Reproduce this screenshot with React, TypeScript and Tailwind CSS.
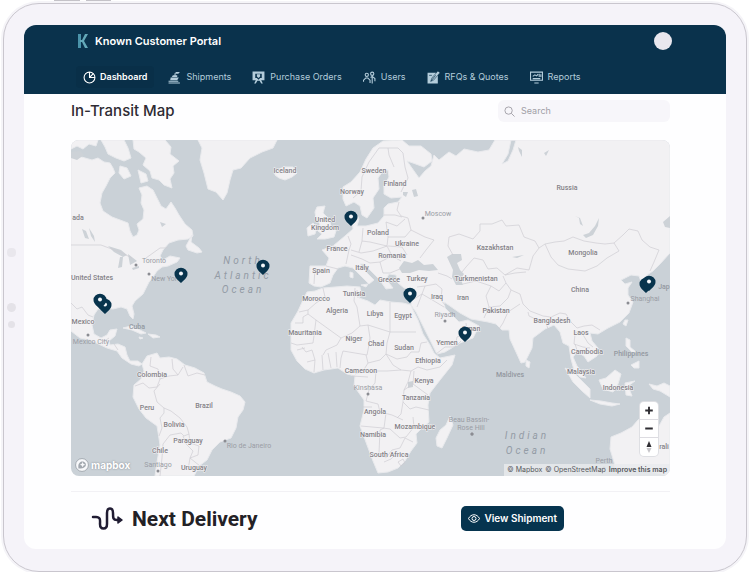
import type { ReactNode } from "react";

type Place = { name: string; x: number; y: number; soft?: boolean };

const countries: Place[] = [
  { name: "ada", x: 78, y: 220 },
  { name: "United States", x: 92, y: 280 },
  { name: "Mexico", x: 83, y: 324 },
  { name: "Cuba", x: 137, y: 329, soft: true },
  { name: "Colombia", x: 152, y: 377 },
  { name: "Brazil", x: 204, y: 408 },
  { name: "Peru", x: 147, y: 410 },
  { name: "Bolivia", x: 174, y: 427 },
  { name: "Paraguay", x: 188, y: 443 },
  { name: "Chile", x: 160, y: 453 },
  { name: "Uruguay", x: 194, y: 470 },
  { name: "Iceland", x: 285, y: 173 },
  { name: "Sweden", x: 374, y: 173 },
  { name: "Finland", x: 395, y: 186 },
  { name: "Norway", x: 352, y: 194 },
  { name: "United", x: 325, y: 222 },
  { name: "Kingdom", x: 325, y: 230 },
  { name: "Poland", x: 378, y: 235 },
  { name: "Ukraine", x: 407, y: 246 },
  { name: "France", x: 337, y: 251 },
  { name: "Romania", x: 392, y: 258 },
  { name: "Italy", x: 362, y: 270 },
  { name: "Spain", x: 321, y: 273 },
  { name: "Greece", x: 389, y: 282 },
  { name: "Turkey", x: 417, y: 281 },
  { name: "Tunisia", x: 354, y: 296 },
  { name: "Morocco", x: 316, y: 301 },
  { name: "Iraq", x: 437, y: 299 },
  { name: "Iran", x: 463, y: 300 },
  { name: "Turkmenistan", x: 476, y: 281 },
  { name: "Kazakhstan", x: 495, y: 250 },
  { name: "Russia", x: 567, y: 190 },
  { name: "Mongolia", x: 583, y: 255 },
  { name: "China", x: 580, y: 292 },
  { name: "Jap", x: 664, y: 289, soft: true },
  { name: "Pakistan", x: 496, y: 313 },
  { name: "Bangladesh", x: 552, y: 323 },
  { name: "Laos", x: 581, y: 335 },
  { name: "Cambodia", x: 587, y: 354 },
  { name: "Philippines", x: 631, y: 356, soft: true },
  { name: "Malaysia", x: 581, y: 374 },
  { name: "Indonesia", x: 618, y: 390 },
  { name: "Maldives", x: 510, y: 377, soft: true },
  { name: "Algeria", x: 337, y: 313 },
  { name: "Libya", x: 375, y: 316 },
  { name: "Egypt", x: 403, y: 318 },
  { name: "Mauritania", x: 305, y: 335 },
  { name: "Niger", x: 354, y: 341 },
  { name: "Chad", x: 376, y: 346 },
  { name: "Sudan", x: 404, y: 350 },
  { name: "Yemen", x: 447, y: 345 },
  { name: "Oman", x: 471, y: 331 },
  { name: "Ethiopia", x: 428, y: 363 },
  { name: "Cameroon", x: 361, y: 373 },
  { name: "Kenya", x: 424, y: 383 },
  { name: "Tanzania", x: 416, y: 400 },
  { name: "Angola", x: 375, y: 414 },
  { name: "Mozambique", x: 415, y: 429 },
  { name: "Namibia", x: 373, y: 437 },
  { name: "South Africa", x: 389, y: 457 },
  { name: "rali", x: 664, y: 449 },
];

const cities = [
  { name: "Toronto", x: 154, y: 263, dotX: 136, dotY: 265 },
  { name: "New York", x: 166, y: 281, dotX: 149, dotY: 274 },
  { name: "Mexico City", x: 91, y: 344, dotX: 88, dotY: 335 },
  { name: "Rio de Janeiro", x: 249, y: 448, dotX: 225, dotY: 441 },
  { name: "Santiago", x: 158, y: 467, dotX: 158, dotY: 471 },
  { name: "Moscow", x: 438, y: 216, dotX: 423, dotY: 218 },
  { name: "Riyadh", x: 445, y: 317, dotX: 445, dotY: 321 },
  { name: "Kinshasa", x: 368, y: 390, dotX: 368, dotY: 394 },
  { name: "Shanghai", x: 645, y: 301, dotX: 628, dotY: 303 },
  { name: "Beau Bassin-", x: 469, y: 422, dotX: 472, dotY: 434 },
  { name: "Rose Hill", x: 471, y: 430, dotX: 472, dotY: 434 },
  { name: "Perth", x: 604, y: 463, dotX: 604, dotY: 468 },
];

const oceans = [
  { name: "North", x: 243, y: 264 },
  { name: "Atlantic", x: 243, y: 279 },
  { name: "Ocean", x: 243, y: 293 },
  { name: "Indian", x: 527, y: 439 },
  { name: "Ocean", x: 527, y: 454 },
];

// x / y is the tip of the pin
const shipments = [
  { x: 105, y: 314 },
  { x: 100, y: 309 },
  { x: 181, y: 283 },
  { x: 263, y: 275 },
  { x: 351, y: 226 },
  { x: 410, y: 303 },
  { x: 465, y: 342 },
  { x: 646, y: 293 },
  { x: 649, y: 291 },
];

const land = [
  // north america
  "M71 158L78 156 85 158 92 160 98 158 104 162 110 163 113 168 115 173 110 178 106 186 102 193 100 203 103 211 112 217 120 220 128 223 130 231 133 237 137 235 139 230 137 224 143 219 144 210 141 203 142 195 139 188 147 186 153 190 157 198 161 206 166 209 171 202 175 208 179 215 185 224 192 230 193 236 188 239 178 240 169 243 163 250 160 256 163 260 170 256 180 258 177 262 168 266 162 267 157 271 153 277 149 282 146 288 143 294 135 301 132 306 134 314 133 319 130 316 127 309 121 307 113 309 105 308 98 309 94 315 92 325 94 334 101 338 107 335 110 330 117 329 115 336 109 341 110 345 118 344 125 347 127 355 130 361 138 361 142 364 139 366 131 364 122 358 117 351 107 348 90 340 80 338 71 331Z",
  // arctic islands
  "M71 140L98 140 96 146 89 144 83 149 77 146 71 149ZM101 140L124 140 128 148 131 158 124 161 116 158 108 154 105 147ZM133 140L165 140 171 147 170 154 179 161 173 166 174 173 170 179 172 188 164 185 159 180 152 178 150 171 143 165 146 158 139 152 134 149ZM120 166L127 168 131 176 124 179 119 173ZM138 170L146 174 148 181 141 183Z",
  "M192 235L191 242 199 248 202 252 197 253 188 250 186 246Z",
  // greenland, iceland
  "M198 140L202 148 200 160 204 173 208 189 216 192 223 200 227 193 230 180 233 170 241 168 250 158 262 152 273 148 277 140Z",
  "M275 170L279 169 284 167 293 167 297 173 292 177 285 180 279 178 275 175Z",
  // caribbean
  "M123 328L131 326 140 330 146 333 141 334 132 330ZM148 334L156 335 160 337 153 338ZM139 337l4 1-3 1Z",
  // south america
  "M142 364L147 356 157 353 160 358 169 357 177 359 185 365 195 368 204 373 207 382 215 386 222 389 231 392 240 396 245 402 243 410 238 417 236 428 231 438 220 442 212 450 207 460 199 466 194 476 155 476 157 462 160 445 158 432 157 426 146 418 139 409 133 397 134 385 141 379 144 371Z",
  // british isles
  "M317 207L325 206 323 213 329 219 331 226 336 231 334 237 325 239 317 239 322 234 318 231 320 224 316 219 315 212ZM307 228L313 223 317 227 315 234 308 236Z",
  // africa
  "M307 292L315 291 323 288 335 287 347 286 360 287 361 294 359 298 368 301 375 305 380 300 391 302 403 303 411 305 413 310 418 320 423 334 430 345 434 353 440 358 455 355 452 365 440 380 430 393 428 405 429 422 422 428 416 434 417 443 411 451 405 461 398 468 388 472 378 473 373 461 367 445 360 426 364 410 364 400 354 386 355 376 347 374 338 368 324 370 314 373 305 369 297 361 291 350 291 338 291 323 298 311 303 300Z",
  "M450 416L453 425 447 438 442 448 437 446 436 438 440 430 446 425Z",
  // eurasia
  "M670 140L670 253 660 264 653 271 647 275 642 284 639 276 631 275 621 280 625 284 632 282 628 288 628 295 633 302 629 313 620 322 608 328 598 334 590 333 592 341 598 348 597 356 588 362 584 356 577 352 573 357 577 366 586 378 580 377 574 370 571 359 569 346 563 343 560 332 554 325 545 329 533 338 532 348 525 362 521 363 516 352 510 339 509 330 502 330 496 324 488 322 471 319 460 313 450 306 444 302 445 308 453 316 459 322 468 320 479 326 473 338 460 343 445 352 437 354 431 342 424 328 416 312 411 305 413 290 404 288 398 283 396 275 389 274 386 279 393 288 386 289 379 279 371 271 364 264 360 264 366 272 374 280 369 284 361 276 353 268 345 266 338 268 333 275 330 283 321 287 314 286 309 283 310 266 326 266 329 258 322 250 333 246 345 236 353 229 352 218 356 213 359 219 357 226 366 226 378 223 384 216 384 208 388 204 398 202 402 197 391 198 384 194 384 186 389 177 388 170 383 171 378 178 379 189 373 198 374 208 367 218 362 215 360 206 354 202 346 206 343 199 343 187 351 182 360 172 366 159 373 148 383 141 402 140 409 146 421 146 431 154 432 161 424 167 413 163 407 161 414 171 419 178 425 171 431 166 434 155 439 160 449 152 456 156 464 149 478 152 489 150 495 140Z",
  "M511 140L508 154 502 164 508 161 513 150 516 140Z",
  // mediterranean islands, sri lanka
  "M350 272l3 1v5l-3-1ZM361 285l7-1-2 3ZM404 291l4-1-2 2ZM526 360l4 2-1 6-3-2Z",
  // south east asia
  "M565 368L574 373 582 381 590 389 590 398 582 391 573 382ZM590 400L601 401 612 403 620 404 612 406 600 404ZM599 380L606 378 615 370 621 374 618 384 613 392 603 389ZM625 383L635 381 628 386 632 396 626 395ZM625 320l3 0-2 6-3-2ZM626 338l4 2 0 7 6 5-4 0-6-6ZM631 365l8-4 0 7-5 0ZM649 384L657 386 664 383 670 386 670 397 660 391 653 389Z",
  "M611 437L621 433 632 427 638 420 647 414 655 416 652 422 659 426 664 417 670 413 670 476 640 469 630 468 616 473 614 462 610 449Z",
].join("");

const water =
  "M71 152L80 151 84 155 77 160 71 158ZM82 229l4 2 3 8-4-1ZM89 228l5 8 1 6-4-6ZM108 246L121 250 127 255 123 257 114 252ZM120 257l3 0-1 10-4 1ZM128 254l9 7-7 4ZM132 268l7-2 0 2-6 2ZM160 222l6 2-4 3ZM399 268L404 261 412 263 418 260 424 265 433 264 438 270 429 271 419 270 410 273 402 273ZM447 257L452 254 461 254 462 260 457 263 460 270 464 274 461 279 463 285 456 285 452 277 453 270ZM583 235L589 233 595 226 599 218 598 226 593 235 586 238ZM575 216l5 2 3 8-3-2-1-6ZM518 147l4 3 0 7-3-6ZM544 153l5-3-3 6ZM412 190l4-1 2 7-4 1ZM403 192l5 0-2 5-3-2ZM408 382l5-1 0 6-5 1ZM512 257l12-2-7 3ZM663 222l7-6 0 12-5-1Z";

const borders =
  "M71 245H101L109 248 120 252 132 258M146 258L160 248 168 248M71 303L77 309 82 307 88 315 93 317M103 342L109 338M114 344L118 350M151 357L150 366 158 369 160 379 157 387 149 388 143 383 135 386M160 379L169 376 178 375 183 367M172 359L173 369 178 375M184 365L188 376 197 373 205 375M160 384L154 391 157 402 164 408 164 413 160 418 162 428 159 436M164 408L171 411 180 418 187 427 189 434 184 436 181 433 170 435 163 444 162 458 160 476M189 434L190 443 199 446 198 455 190 458M190 458L200 466M183 436L186 444 193 451 190 458 188 470" +
  "M353 198L361 191 362 177 369 162 379 148 388 148 389 155 394 167M388 148L398 148 403 153 405 167 408 178 401 192M399 202L397 210 401 216 408 218 411 230 405 237 388 237 386 222M384 215L395 215 402 217M386 222L397 226 405 219M363 228L362 241 370 242 387 246 388 237M333 246L343 249 349 250 351 244 348 236M349 250L346 264M351 250L361 253 373 251 387 246 392 256 380 262 370 263 362 259 351 255M392 256L401 261M380 262L383 273 390 273 400 269M362 241L359 252M326 266L338 269M315 268L314 284M411 230L425 237 434 240 426 250 420 258M388 246L402 247 407 255" +
  "M453 255L448 246 449 237 459 234 473 239 480 231 480 224 492 224 502 220 506 226 519 225 524 237 535 241 539 248 533 256 529 270 517 268 505 275 497 268 488 269 483 260 474 258 466 267 462 272M545 244L555 242 564 241 573 237 584 241 596 243 605 244 614 243 619 251 607 258 597 266 585 271 568 269 558 265 551 257ZM614 243L623 235 629 229 638 231 642 240 650 247 659 250 654 262 650 271M539 248L545 244M463 284L476 281 491 286 499 291 506 283 503 276M505 275L515 273 526 272M491 286L486 296 489 307 484 318M489 307L500 306 508 298 511 290 506 283M511 290L520 294 523 304 530 311 543 316 551 317 560 313 566 314 571 322 577 328 584 326 592 325 600 330M520 304L508 312 503 323 499 329M528 312L529 316 540 321 551 322M546 323L548 329M557 324L561 318M574 332L582 333 588 343 593 347M575 334L574 344 583 347 590 348M577 350L575 344" +
  "M417 287L425 286 436 284 442 289 441 300 445 305M438 273L447 276 452 279M425 286L422 294 414 299M422 294L434 301 444 307M422 294L417 307M436 354L445 347 455 347 461 341M455 347L457 337 467 332 466 323" +
  "M323 288L325 297 316 303 308 310 299 312M308 310L308 314 316 320 341 338 352 333 360 326 357 307 354 301 355 288M295 323L303 323 303 317 308 314M316 320L313 343 297 345 291 343M341 338L337 345 326 350 323 355M360 326L368 325 370 338 368 350 367 355 355 353 343 351 341 358 340 368M357 290L358 298M390 302L390 332 368 325M390 332H416M390 332L387 343 386 354 397 359 407 357 411 352 419 352 421 343 427 342M366 355L368 363 363 371 355 374M368 363L380 360 386 354 393 365 401 370 411 371 418 367 427 370 440 367 447 360M376 371L375 383 369 390 366 401 378 404 380 412 392 415 403 420M376 371L387 371 401 370M411 371L408 382 404 390 403 402 410 409 416 407 429 410M404 390L413 384 428 395M413 384L414 371M363 407L372 407M361 426L383 428 390 429M386 413L384 428 380 430 379 453 386 458 392 450 400 448 405 438 413 442M390 429L400 438 406 437 414 427 413 417M403 402L401 414 397 418M384 462L391 459 398 452M398 462l5-3 2 4-4 3ZM302 347L306 352 312 350 315 360 307 362M315 360L314 372M328 353L331 368M336 352L337 367M322 355L323 370M297 350L305 348M352 376L368 377";

const navItems: { label: string; icon: ReactNode; active?: boolean }[] = [
  {
    label: "Dashboard",
    active: true,
    icon: (
      <g fill="none" stroke="currentColor" strokeWidth="2">
        <circle cx="12" cy="12" r="10" />
        <path d="M12 2v10h10M12 12l7-7" />
      </g>
    ),
  },
  {
    label: "Shipments",
    icon: (
      <g fill="currentColor">
        <path d="M5 12h15l-3 5H4ZM9 8h8v3H7ZM12 4h2v4h-2ZM14 2l8 0-3 3-5 0Z" />
        <path d="M1 18h18v2H1ZM1 21h21v2H1Z" />
      </g>
    ),
  },
  {
    label: "Purchase Orders",
    icon: (
      <path
        fill="currentColor"
        fillRule="evenodd"
        d="M1 1h22v16h-6l3 6h-3l-3-5h-4l-3 5H4l3-6H1ZM6 5v8h3l3 3 3-3h3V5ZM9 6h6v4l-3 3-3-3Z"
      />
    ),
  },
  {
    label: "Users",
    icon: (
      <g fill="none" stroke="currentColor" strokeWidth="2">
        <circle cx="7" cy="7" r="3" />
        <circle cx="17" cy="5" r="3" />
        <path d="M1 20v-3l4-4h4l4 4v5M14 12l3-2 5 4v5M17 11v12" />
      </g>
    ),
  },
  {
    label: "RFQs & Quotes",
    icon: (
      <g>
        <path fill="currentColor" d="M1 3h15l4 3v17H1Z" />
        <path fill="currentColor" stroke="#0a324c" strokeWidth="1" d="M20 0l4 3L12 17l-5 2 2-6Z" />
        <path fill="none" stroke="#0a324c" strokeWidth="1.3" d="M7 19l9-11M4 8h5" />
      </g>
    ),
  },
  {
    label: "Reports",
    icon: (
      <g fill="none" stroke="currentColor" strokeWidth="2">
        <path d="M1 2h22v15H1ZM5 14h14M8 22h8M5 10l4-3 3 2 3-3M17 5v6M20 6v5" />
      </g>
    ),
  },
];

export default function App() {
  return (
    <div className="bg-white px-[3px] pt-[3px] font-['Inter',sans-serif]">
      <div className="relative rounded-[36px] border border-[#c9c6ce] bg-[#f5f3f9] px-5 pt-[21px] pb-[22px] shadow-[0_0_0_2px_#f5f4f8]">
        <TabletHardware />
        <div className="overflow-hidden rounded-xl bg-[#fefeff]">
          <Header />
          <main className="pr-14 pl-[47px]">
            <div className="flex items-center justify-between pt-1.5">
              <h1 className="text-[15px] leading-[22px] font-medium text-[#2e2b33]">
                In-Transit Map
              </h1>
              <label className="flex h-[22px] w-[172px] items-center gap-1.5 rounded-md bg-[#f7f6fa] px-1.5 text-[#a19fa6]">
                <svg viewBox="0 0 24 24" className="size-[11px]" fill="none" stroke="currentColor" strokeWidth="2" aria-hidden="true">
                  <circle cx="10" cy="10" r="8" />
                  <path d="M16 16l7 7" />
                </svg>
                <input
                  type="search"
                  aria-label="Search"
                  placeholder="Search"
                  className="min-w-0 flex-1 bg-transparent text-[9px] outline-none placeholder:text-[#a19fa6]"
                />
              </label>
            </div>
            <TransitMap />
            <NextDelivery />
          </main>
        </div>
      </div>
    </div>
  );
}

// Volume keys on the top edge, camera and sensors on the left bezel.
function TabletHardware() {
  return (
    <div aria-hidden="true">
      <div className="absolute -top-1 left-[50px] h-px w-[26px] bg-[#c4c2c8]" />
      <div className="absolute -top-1 left-[82px] h-px w-[25px] bg-[#c4c2c8]" />
      <div className="absolute top-[244px] left-[3px] size-[9px] rounded-sm bg-[#e9e7ed]" />
      <div className="absolute top-[299px] left-[3px] size-[9px] rounded-full bg-[#e4e2e8]" />
      <div className="absolute top-[317px] left-1 size-[7px] rounded-full bg-[#e4e2e8]" />
    </div>
  );
}

function Header() {
  return (
    <header className="bg-[#0a324c] pr-[54px] pl-[52px] pt-[7px] pb-1.5">
      <div className="flex h-[18px] items-center gap-[5px]">
        <svg viewBox="0 0 14 14" className="size-[14px]" aria-hidden="true">
          <path d="M2 0h3v14H2Z" fill="#4a93aa" />
          <path d="M9 0h3L8 7l4 7H9L6 8H4V6h2Z" fill="#64a9b9" />
        </svg>
        <span className="text-[11px] font-semibold text-white">Known Customer Portal</span>
        <button type="button" aria-label="Account" className="ml-auto size-[18px] rounded-full bg-[#e9e7ee]" />
      </div>
      <nav aria-label="Primary" className="mt-4 flex">
        {navItems.map(({ label, icon, active }) => (
          <a
            key={label}
            href="#"
            aria-current={active ? "page" : undefined}
            className={
              active
                ? "mr-3.5 flex h-[22px] items-center gap-1 rounded bg-[#092f48] px-[7px] text-[9px] font-semibold text-white"
                : "mr-[21px] flex h-[22px] items-center gap-[5px] text-[9px] text-[#b4cddb]"
            }
          >
            <svg viewBox="0 0 24 24" className="size-[13px]" aria-hidden="true">
              {icon}
            </svg>
            {label}
          </a>
        ))}
      </nav>
    </header>
  );
}

function TransitMap() {
  return (
    <section aria-label="In-transit map" className="relative mt-[18px] overflow-hidden rounded-lg bg-[#cad1d7]">
      <svg viewBox="71 140 599 336" className="block w-full font-['Roboto',sans-serif]">
        <path d={land} fill="#f2f1f3" stroke="#e9eaed" strokeWidth="1" strokeLinejoin="round" />
        <path d={water} fill="#cdd2d7" />
        <path d={borders} fill="none" stroke="#cfcdd2" strokeWidth="0.7" strokeLinejoin="round" />
        <g textAnchor="middle" className="text-[10px] italic" fill="#939ba5" letterSpacing="3">
          {oceans.map((o) => (
            <text key={`${o.name}-${o.x}-${o.y}`} x={o.x} y={o.y}>
              {o.name}
            </text>
          ))}
        </g>
        <g textAnchor="middle" className="text-[7px]" fill="#9a9da5">
          {cities.map((c) => (
            <g key={c.name}>
              <circle cx={c.dotX} cy={c.dotY} r="1.5" fill="#8b8c92" />
              <text x={c.x} y={c.y}>
                {c.name}
              </text>
            </g>
          ))}
        </g>
        <g textAnchor="middle" className="text-[7px] font-medium">
          {countries.map((c) => (
            <text
              key={c.name}
              x={c.x}
              y={c.y}
              fill={c.soft ? "#9398a0" : "#838186"}
              stroke={c.soft ? "none" : "#f5f4f6"}
              strokeWidth="1"
              paintOrder="stroke"
            >
              {c.name}
            </text>
          ))}
        </g>
        {shipments.map((s) => (
          <g key={`${s.x}-${s.y}`} transform={`translate(${s.x} ${s.y})`}>
            <path d="M0 0C-2-2-6.5-5-6.5-9A6.5 6.2 0 0 1 6.5-9C6.5-5 2-2 0 0Z" fill="#08344d" />
            <circle cx="0" cy="-9.5" r="2" fill="#f3f7fa" />
          </g>
        ))}
      </svg>

      <a href="#" className="absolute bottom-1 left-1 flex items-center gap-0.5" aria-label="mapbox">
        <svg viewBox="0 0 24 24" className="size-[14px]" aria-hidden="true">
          <circle cx="12" cy="12" r="11" fill="#f8f9fb" stroke="#9ba2a9" strokeWidth="1.5" />
          <path d="M6 18c-1-5 0-10 5-12 6-1 9 4 7 8-3 4-7 4-12 4Z" fill="#a2a8af" />
          <path d="M13 7l1.5 3 3 1.5-3 1.5-1.5 3-1.5-3-3-1.5 3-1.5Z" fill="#f8f9fb" />
        </svg>
        <span className="text-[10px] leading-[14px] font-bold text-white [text-shadow:0_0_2px_#7e858d]">mapbox</span>
      </a>

      <div className="absolute right-3 bottom-5 flex w-[18px] flex-col divide-y divide-[#dddce1] overflow-hidden rounded-sm bg-white shadow-[0_0_0_1px_#dedfe3]">
        <MapButton label="Zoom in">
          <path d="M9 5v8M5 9h8" stroke="#2f2e33" strokeWidth="2" />
        </MapButton>
        <MapButton label="Zoom out">
          <path d="M5 9h8" stroke="#2f2e33" strokeWidth="2" />
        </MapButton>
        <MapButton label="Reset bearing to north">
          <path d="M9 3l2.5 6h-5Z" fill="#2f2e33" />
          <path d="M9 15l2.5-5h-5Z" fill="#c5c4c8" />
        </MapButton>
      </div>

      <div className="absolute right-0 bottom-0 flex h-3 items-center gap-[3px] bg-[#e9ebee]/80 px-[3px] text-[7px] text-[#55565b]">
        <a href="#">© Mapbox</a>
        <a href="#">© OpenStreetMap</a>
        <a href="#" className="font-semibold">
          Improve this map
        </a>
      </div>
    </section>
  );
}

function MapButton({ label, children }: { label: string; children: ReactNode }) {
  return (
    <button type="button" aria-label={label} className="h-[18px] w-full">
      <svg viewBox="0 0 18 18" className="size-full" aria-hidden="true">
        {children}
      </svg>
    </button>
  );
}

function NextDelivery() {
  return (
    <section className="mt-[15px] flex h-[58px] items-center justify-between border-t border-[#f2f1f5] pr-[106px] pb-1 pl-5">
      <h2 className="flex items-center gap-[9px] font-['Roboto',sans-serif] text-[21px] leading-7 font-bold text-[#232126]">
        <svg viewBox="0 0 32 26" className="h-[26px] w-8" fill="none" stroke="#201c33" strokeWidth="2.5" strokeLinecap="round" strokeLinejoin="round" aria-hidden="true">
          <path d="M2 11h3c5 0 4 4 4 7 0 6 7 6 7 0V7c0-6 6-6 6 0 0 5 0 7 4 7h2" />
          <path d="M27 11l4 3-4 3Z" fill="#201c33" strokeWidth="1.5" />
        </svg>
        Next Delivery
      </h2>
      <button
        type="button"
        className="flex h-[25px] items-center gap-1 rounded-[5px] bg-[#06344f] px-[7px] text-[10px] font-semibold text-white"
      >
        <svg viewBox="0 0 24 18" className="h-[9px] w-3" fill="none" stroke="currentColor" strokeWidth="2" aria-hidden="true">
          <path d="M1 9c5-10 17-10 22 0-5 10-17 10-22 0Z" />
          <circle cx="12" cy="9" r="4" />
        </svg>
        View Shipment
      </button>
    </section>
  );
}
